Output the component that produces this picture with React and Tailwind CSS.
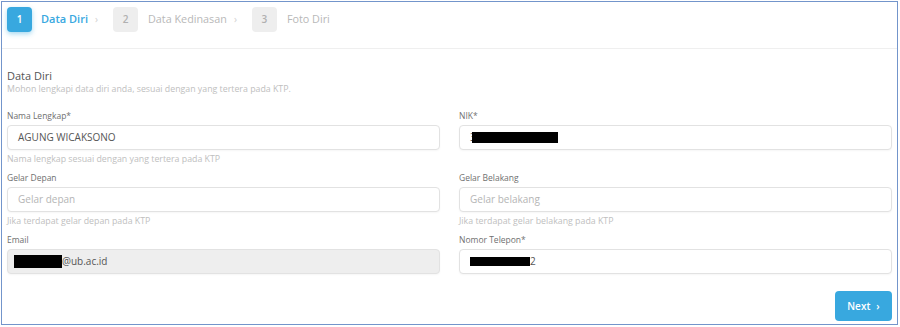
import React from 'react'

const steps = [
  { n: 1, label: 'Data Diri', active: true },
  { n: 2, label: 'Data Kedinasan' },
  { n: 3, label: 'Foto Diri', last: true },
]

const Step = ({ n, label, active, last }) => (
  <div className="flex items-center">
    <div
      className={
        active
          ? 'w-[25px] h-[25px] rounded-[4px] bg-[#38a8df] text-white flex items-center justify-center text-[10px] font-semibold shadow-[0_2px_5px_rgba(56,168,223,0.45)]'
          : 'w-[25px] h-[25px] rounded-[4px] bg-[#eeeeee] text-[#b0b0b0] flex items-center justify-center text-[10px] font-semibold'
      }
    >
      {n}
    </div>
    <span className={active ? 'ml-[9px] text-[11px] font-semibold text-[#38a8df]' : 'ml-[10px] text-[10.8px] font-medium text-[#b8b8b8]'}>
      {label}
    </span>
    {!last && <span className="ml-[7px] text-[10px] text-[#d0d0d0]">›</span>}
  </div>
)

const Field = ({ label, placeholder, value, helper, disabled, children }) => (
  <div className="flex flex-col">
    <div className="h-[18px] flex items-center text-[8.5px] text-[#707070]">{label}</div>
    <div
      className={
        (disabled ? 'bg-[#eeeeee] ' : 'bg-white ') +
        'h-[25px] rounded-[4px] border border-[#e2e2e2] shadow-[0_1px_2px_rgba(0,0,0,0.04)] flex items-center px-[10px] text-[10px]'
      }
    >
      {children ? children : value ? (
        <span className="text-[#555]">{value}</span>
      ) : (
        <span className="text-[#b5b5b5]">{placeholder}</span>
      )}
    </div>
    <div className="h-[19px] flex items-center text-[8.8px] text-[#c0c0c0]">{helper}</div>
  </div>
)

export default function App() {
  return (
    <div className="w-[900px] h-[327px] bg-white pl-[1px] pt-[1px] font-['Open_Sans',sans-serif]">
      <div className="w-[897px] h-[324px] border-[1.5px] border-[#7395cb] bg-white flex flex-col">
        <div className="h-[47px] flex items-start pt-[5px] pl-[5px] gap-[15px] border-b border-[#efefef]">
          {steps.map(s => (
            <Step key={s.n} {...s} />
          ))}
        </div>

        <div className="px-[5px] pt-[20px]">
          <div className="text-[11px] text-[#555] leading-[14px]">Data Diri</div>
          <div className="text-[8.8px] text-[#c0c0c0] leading-[13px]">
            Mohon lengkapi data diri anda, sesuai dengan yang tertera pada KTP.
          </div>

          <div className="grid grid-cols-2 gap-x-[19px] mt-[11px]">
            <Field label="Nama Lengkap*" value="AGUNG WICAKSONO" helper="Nama lengkap sesuai dengan yang tertera pada KTP" />
            <Field label="NIK*" helper="">
              <span className="text-[#555]">3</span>
              <span className="ml-[-4px] w-[86px] h-[11px] bg-black" />
            </Field>
            <Field label="Gelar Depan" placeholder="Gelar depan" helper="Jika terdapat gelar depan pada KTP" />
            <Field label="Gelar Belakang" placeholder="Gelar belakang" helper="Jika terdapat gelar belakang pada KTP" />
            <Field label="Email" disabled helper="">
              <span className="ml-[-4px] w-[48px] h-[13px] bg-black" />
              <span className="text-[#555]">@ub.ac.id</span>
            </Field>
            <Field label="Nomor Telepon*" helper="">
              <span className="w-[60px] h-[9px] bg-black" />
              <span className="text-[#555]">2</span>
            </Field>
          </div>

          <div className="flex justify-end -mt-[2px]">
            <button className="w-[57px] h-[30px] rounded-[4px] bg-[#38a8df] text-white text-[10px] font-semibold flex items-center justify-center gap-[6px]">
              Next <span className="text-[10px]">›</span>
            </button>
          </div>
        </div>
      </div>
    </div>
  )
}
